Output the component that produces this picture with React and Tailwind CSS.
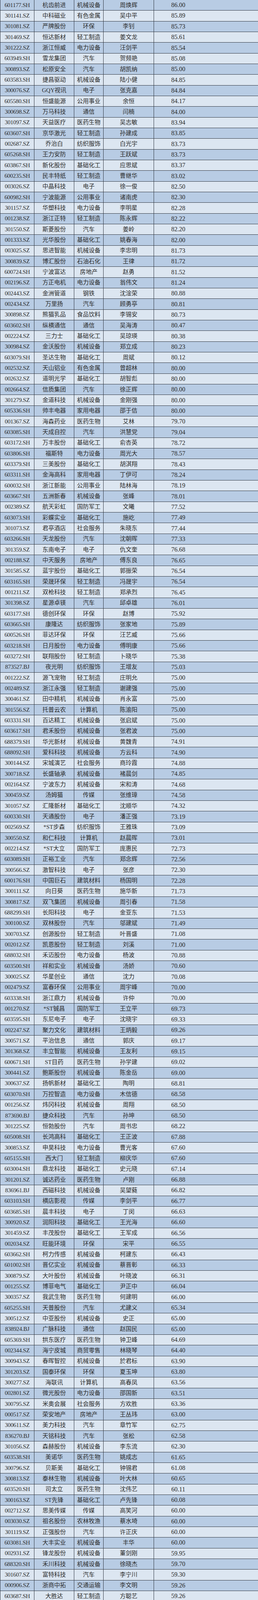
const DATA = `601177.SH 杭齿前进 机械设备 周焕辉 86.00
301141.SZ 中科磁业 有色金属 吴中平 85.89
301081.SZ 严牌股份 环保 李钊 85.73
301469.SZ 恒达新材 轻工制造 姜文龙 85.61
301222.SZ 浙江恒威 电力设备 汪剑平 85.54
603949.SH 雪龙集团 汽车 贺频艳 85.08
300893.SZ 松原安全 汽车 胡凯纳 85.00
603583.SH 捷昌驱动 机械设备 陆小健 84.85
300076.SZ GQY视讯 电子 张克嘉 84.84
605580.SH 恒盛能源 公用事业 余恒 84.17
300698.SZ 万马科技 通信 闫楠 84.00
301097.SZ 天益医疗 医药生物 吴志敏 83.94
603607.SH 京华激光 轻工制造 孙建成 83.85
002687.SZ 乔治白 纺织服饰 白光宇 83.73
605268.SH 王力安防 轻工制造 王跃斌 83.73
603867.SH 新化股份 基础化工 应思斌 83.37
600235.SH 民丰特纸 轻工制造 曹继华 83.02
003026.SZ 中晶科技 电子 徐一俊 82.50
600982.SH 宁波能源 公用事业 诸南虎 82.30
301157.SZ 华塑科技 电力设备 李明星 82.28
001238.SZ 浙江正特 轻工制造 陈永辉 82.22
301550.SZ 斯菱股份 汽车 姜岭 82.20
001333.SZ 光华股份 基础化工 姚春海 82.00
003025.SZ 思进智能 机械设备 李忠明 81.73
300839.SZ 博汇股份 石油石化 王律 81.72
600724.SH 宁波富达 房地产 赵勇 81.52
002196.SZ 方正电机 电力设备 翁伟文 81.24
002443.SZ 金洲管道 钢铁 沈淦荣 80.88
002434.SZ 万里扬 汽车 顾勇亭 80.81
300898.SZ 熊猫乳品 食品饮料 李锡安 80.73
603602.SH 纵横通信 通信 吴海涛 80.47
002224.SZ 三力士 基础化工 吴琼瑛 80.38
300984.SZ 金沃股份 机械设备 郑立成 80.23
603079.SH 圣达生物 基础化工 周斌 80.12
002532.SZ 天山铝业 有色金属 曾超林 80.00
002632.SZ 道明光学 基础化工 胡智彪 80.00
002664.SZ 信质集团 汽车 徐正辉 80.00
301279.SZ 金道科技 机械设备 金刚强 80.00
605336.SH 帅丰电器 家用电器 邵于佶 80.00
001367.SZ 海森药业 医药生物 艾林 79.70
603085.SH 天成自控 汽车 洪慧党 79.04
603172.SH 万丰股份 基础化工 俞杏英 78.72
603806.SH 福斯特 电力设备 周光大 78.57
603379.SH 三美股份 基础化工 胡淇翔 78.43
603311.SH 金海高科 家用电器 丁伊可 78.24
600032.SH 浙江新能 公用事业 陆林海 78.19
603667.SH 五洲新春 机械设备 张峰 78.01
002389.SZ 航天彩虹 国防军工 文曦 77.52
603073.SH 彩蝶实业 基础化工 施屹 77.49
301073.SZ 君亭酒店 社会服务 朱晓东 77.44
603266.SH 天龙股份 汽车 沈朝晖 77.33
301359.SZ 东南电子 电子 仇文奎 76.68
002188.SZ 中天服务 房地产 傅东良 76.65
301585.SZ 蓝宇股份 基础化工 郭振荣 76.54
603165.SH 荣晟环保 轻工制造 冯晟宇 76.54
001211.SZ 双枪科技 轻工制造 郑承烈 76.45
301398.SZ 星源卓镁 汽车 邱卓雄 76.01
603177.SH 德创环保 环保 赵博 75.92
603665.SH 康隆达 纺织服饰 张家地 75.89
600526.SH 菲达环保 环保 汪艺威 75.66
603218.SH 日月股份 电力设备 傅明康 75.66
603272.SH 联翔股份 轻工制造 卜晓华 75.38
873527.BJ 夜光明 纺织服饰 王增友 75.03
001222.SZ 源飞宠物 轻工制造 庄明允 75.00
002489.SZ 浙江永强 轻工制造 谢建强 75.00
300461.SZ 田中精机 机械设备 肖永富 75.00
301556.SZ 托普云农 计算机 陈渝阳 75.00
603331.SH 百达精工 机械设备 张启斌 75.00
603617.SH 君禾股份 机械设备 张君波 75.00
688379.SH 华光新材 机械设备 黄魏青 74.91
688092.SH 爱科科技 机械设备 方云科 74.90
300144.SZ 宋城演艺 社会服务 商玲霞 74.88
300718.SZ 长盛轴承 机械设备 褚晨剑 74.85
002164.SZ 宁波东力 机械设备 宋和涛 74.68
300459.SZ 汤姆猫 传媒 张维璋 74.58
301057.SZ 汇隆新材 基础化工 沈顺华 74.32
600330.SH 天通股份 电子 潘正强 73.19
002569.SZ *ST步森 纺织服饰 王雅珠 73.09
300550.SZ 和仁科技 计算机 赵晨晖 73.01
002214.SZ *ST大立 国防军工 庞惠民 72.73
603089.SH 正裕工业 汽车 郑念辉 72.56
300566.SZ 激智科技 电子 张彦 72.30
600176.SH 中国巨石 建筑材料 杨国明 72.28
300111.SZ 向日葵 医药生物 施华新 71.73
300817.SZ 双飞集团 机械设备 周引春 71.58
688299.SH 长阳科技 电子 金亚东 71.53
300100.SZ 双林股份 汽车 邬建斌 71.49
300703.SZ 创源股份 轻工制造 叶晋盛 71.08
002012.SZ 凯恩股份 轻工制造 刘溪 71.00
688032.SH 禾迈股份 电力设备 杨波 70.88
603500.SH 祥和实业 机械设备 汤娇 70.60
300025.SZ 华星创业 通信 沈力 70.08
002479.SZ 富春环保 公用事业 周宇峰 70.00
603338.SH 浙江鼎力 机械设备 许仲 70.00
001270.SZ *ST铖昌 国防军工 王立平 69.73
603595.SH 东尼电子 电子 沈晓宇 69.33
002247.SZ 聚力文化 建筑材料 王炳毅 69.26
300571.SZ 平治信息 通信 郭庆 69.17
301368.SZ 丰立智能 机械设备 王友利 69.15
600671.SH ST目药 医药生物 孙学建 69.02
300441.SZ 鲍斯股份 机械设备 陈金岳 69.00
300637.SZ 扬帆新材 基础化工 陶明 68.81
603070.SH 万控智造 电力设备 木信德 68.58
001256.SZ 炜冈科技 机械设备 周翔 68.50
873690.BJ 捷众科技 汽车 孙坤 68.50
301225.SZ 恒勃股份 汽车 周书忠 68.22
605008.SH 长鸿高科 基础化工 王正波 67.88
300853.SZ 申昊科技 电力设备 曹光客 67.60
605155.SH 西大门 轻工制造 柳庆华 67.60
603004.SH 鼎龙科技 基础化工 史元晓 67.14
301201.SZ 诚达药业 医药生物 卢刚 66.88
836961.BJ 西磁科技 机械设备 吴望蕤 66.82
603103.SH 横店影视 传媒 李剑平 66.77
603685.SH 晨丰科技 电子 丁闵 66.63
300920.SZ 润阳科技 基础化工 王光海 66.60
301459.SZ 丰茂股份 基础化工 王军成 66.56
002034.SZ 旺能环境 环保 宋平 66.55
603662.SH 柯力传感 机械设备 柯建东 66.43
601002.SH 晋亿实业 机械设备 蔡晋彰 66.33
300879.SZ 大叶股份 机械设备 叶晓波 66.31
001255.SZ 博菲电气 基础化工 尹正中 66.04
300357.SZ 我武生物 医药生物 何建明 66.00
605255.SH 天普股份 汽车 尤建义 65.34
300512.SZ 中亚股份 机械设备 史正 65.00
838924.BJ 广脉科技 通信 赵国民 65.00
605369.SH 拱东医疗 医药生物 钟卫峰 64.69
002344.SZ 海宁皮城 商贸零售 林晓琴 64.40
300943.SZ 春晖智控 机械设备 於君标 63.90
301203.SZ 国泰环保 环保 夏玉坤 63.80
300277.SZ 海联讯 计算机 高春凤 63.56
002801.SZ 微光股份 电力设备 邵国新 63.51
300795.SZ 米奥会展 社会服务 方欢胜 63.36
000517.SZ 荣安地产 房地产 王丛玮 63.00
300611.SZ 美力科技 汽车 章竹军 62.75
836270.BJ 天铭科技 汽车 张松 62.58
301056.SZ 森赫股份 机械设备 李东流 62.30
603538.SH 美诺华 医药生物 姚成志 61.65
300796.SZ 贝斯美 基础化工 钟锡君 61.08
300813.SZ 泰林生物 机械设备 叶大林 60.65
603520.SH 司太立 医药生物 沈伟艺 60.11
300163.SZ ST先锋 基础化工 卢先锋 60.08
002712.SZ 思美传媒 传媒 高笑河 60.00
003030.SZ 祖名股份 农林牧渔 蔡水埼 60.00
301119.SZ 正强股份 汽车 许正庆 60.00
603081.SH 大丰实业 机械设备 丰华 60.00
002931.SZ 锋龙股份 机械设备 董剑刚 59.95
688320.SH 禾川科技 机械设备 徐晓杰 59.70
301607.SZ 富特科技 汽车 李宁川 59.30
000906.SZ 浙商中拓 交通运输 李文明 59.26
603687.SH 大胜达 轻工制造 方聪艺 59.26
832149.BJ 利尔达 通信 陈凯 59.15
603733.SH 仙鹤股份 轻工制造 王敏良 59.00
300411.SZ 金盾股份 机械设备 王淼根 58.74
834062.BJ 科润智控 电力设备 章群锋 58.22
002574.SZ 明牌珠宝 纺织服饰 虞豪华 57.96
002135.SZ 东南网架 建筑装饰 徐春祥 57.90
001358.SZ 兴欣新材 基础化工 沈华伟 57.37
002370.SZ 亚太药业 医药生物 岑建维 57.06
300553.SZ 集智股份 机械设备 楼荣伟 57.02
002144.SZ 宏达高科 纺织服饰 许建舟 56.97
688255.SH 凯尔达 机械设备 杨晓 56.95
831855.BJ 浙江大农 机械设备 王靖 56.60
603297.SH 永新光学 电子 毛磊 56.15
300587.SZ 天铁科技 基础化工 许银斌 56.14
603618.SH 杭电股份 电力设备 倪益剑 55.64
003017.SZ 大洋生物 基础化工 陈旭君 55.42
838701.BJ 豪声电子 电子 徐瑞根 55.23
600987.SH 航民股份 纺织服饰 朱建庆 54.81
300488.SZ 恒锋工具 机械设备 陈子彦 54.35
000909.SZ ST数源 房地产 吴小刚 54.28
002897.SZ 意华股份 通信 蒋友安 54.00
600120.SH 浙江东方 非银金融 王正甲 54.00
300250.SZ 初灵信息 计算机 金宁 53.72
920082.BJ 方正阀门 机械设备 王奕彤 53.65
301237.SZ 和顺科技 基础化工 范和强 53.54
603788.SH 宁波高发 汽车 钱国年 53.37
301309.SZ 万得凯 机械设备 陈方仁 52.15
603917.SH 合力科技 汽车 施良才 52.02
605055.SH 迎丰股份 纺织服饰 傅双利 51.91
300878.SZ 维康药业 医药生物 刘洋 51.40
603168.SH 莎普爱思 医药生物 林弘立 51.00
600768.SH 宁波富邦 有色金属 魏会兵 50.87
002629.SZ 仁智股份 石油石化 陈曦 50.78
301390.SZ 经纬股份 建筑装饰 张伟 50.71
688270.SH 臻镭科技 电子 张兵 50.70
605303.SH 园林股份 建筑装饰 张炎良 50.39
605166.SH 聚合顺 基础化工 毛新华 50.15
300695.SZ 兆丰股份 汽车 孔辰寰 50.00
603095.SH 越剑智能 机械设备 马红光 50.00
301113.SZ 雅艺科技 轻工制造 叶金攀 49.92
002263.SZ 大东南 基础化工 骆平 49.86
300478.SZ 杭州高新 基础化工 陈亚洲 49.78
605162.SH 新中港 公用事业 谢迅 49.76
300849.SZ 锦盛新材 美容护理 阮棋江 49.73
430685.BJ 新芝生物 机械设备 张思远 48.99
603310.SH 巍华新材 基础化工 夏卫平 48.95
600387.SH *ST海越 石油石化 曾佳 48.94
300930.SZ 屹通新材 有色金属 汪志荣 48.89
600571.SH 信雅达 计算机 林路 48.00
600796.SH 钱江生化 环保 孙玉超 48.00`;

const rows = DATA.split("\n").map((line) => line.trim().split(" "));

// one table row; dark rows alternate with light ones, starting dark
const Row = ({ cells, dark }) => {
    const [code, name, industry, person, score] = cells;
    const bg = dark ? "bg-[#b8cce4]" : "bg-[#dce6f1]";
    return (
        <div className={`grid min-h-0 grid-cols-[87px_102px_75px_129px_1fr] overflow-hidden border-b border-[#2f3640] ${bg}`}>
            <div className="flex items-center justify-center border-r border-[#2f3640] text-[15px] tracking-[-0.3px]">{code}</div>
            <div className="flex items-center justify-center border-r border-[#2f3640] text-[15px]">{name}</div>
            <div className="flex items-center justify-center border-r border-[#2f3640] text-[15px]">{industry}</div>
            <div className="flex items-center justify-center border-r border-[#2f3640] text-[15px]">{person}</div>
            <div className="flex items-center">
                <span className="w-[124px] text-center text-[16px]">{score}</span>
            </div>
        </div>
    );
};

export default function App() {
    return (
        <div className="grid h-[5467px] w-[660px] grid-rows-[repeat(200,minmax(0,1fr))] overflow-hidden border-l border-[#2f3640] bg-[#dce6f1] font-['Liberation_Serif','Noto_Sans_CJK_SC',serif] leading-none text-[#2b2b2b]">
            {rows.map((cells, i) => (
                <Row key={cells[0] + i} cells={cells} dark={i % 2 === 0} />
            ))}
        </div>
    );
}
